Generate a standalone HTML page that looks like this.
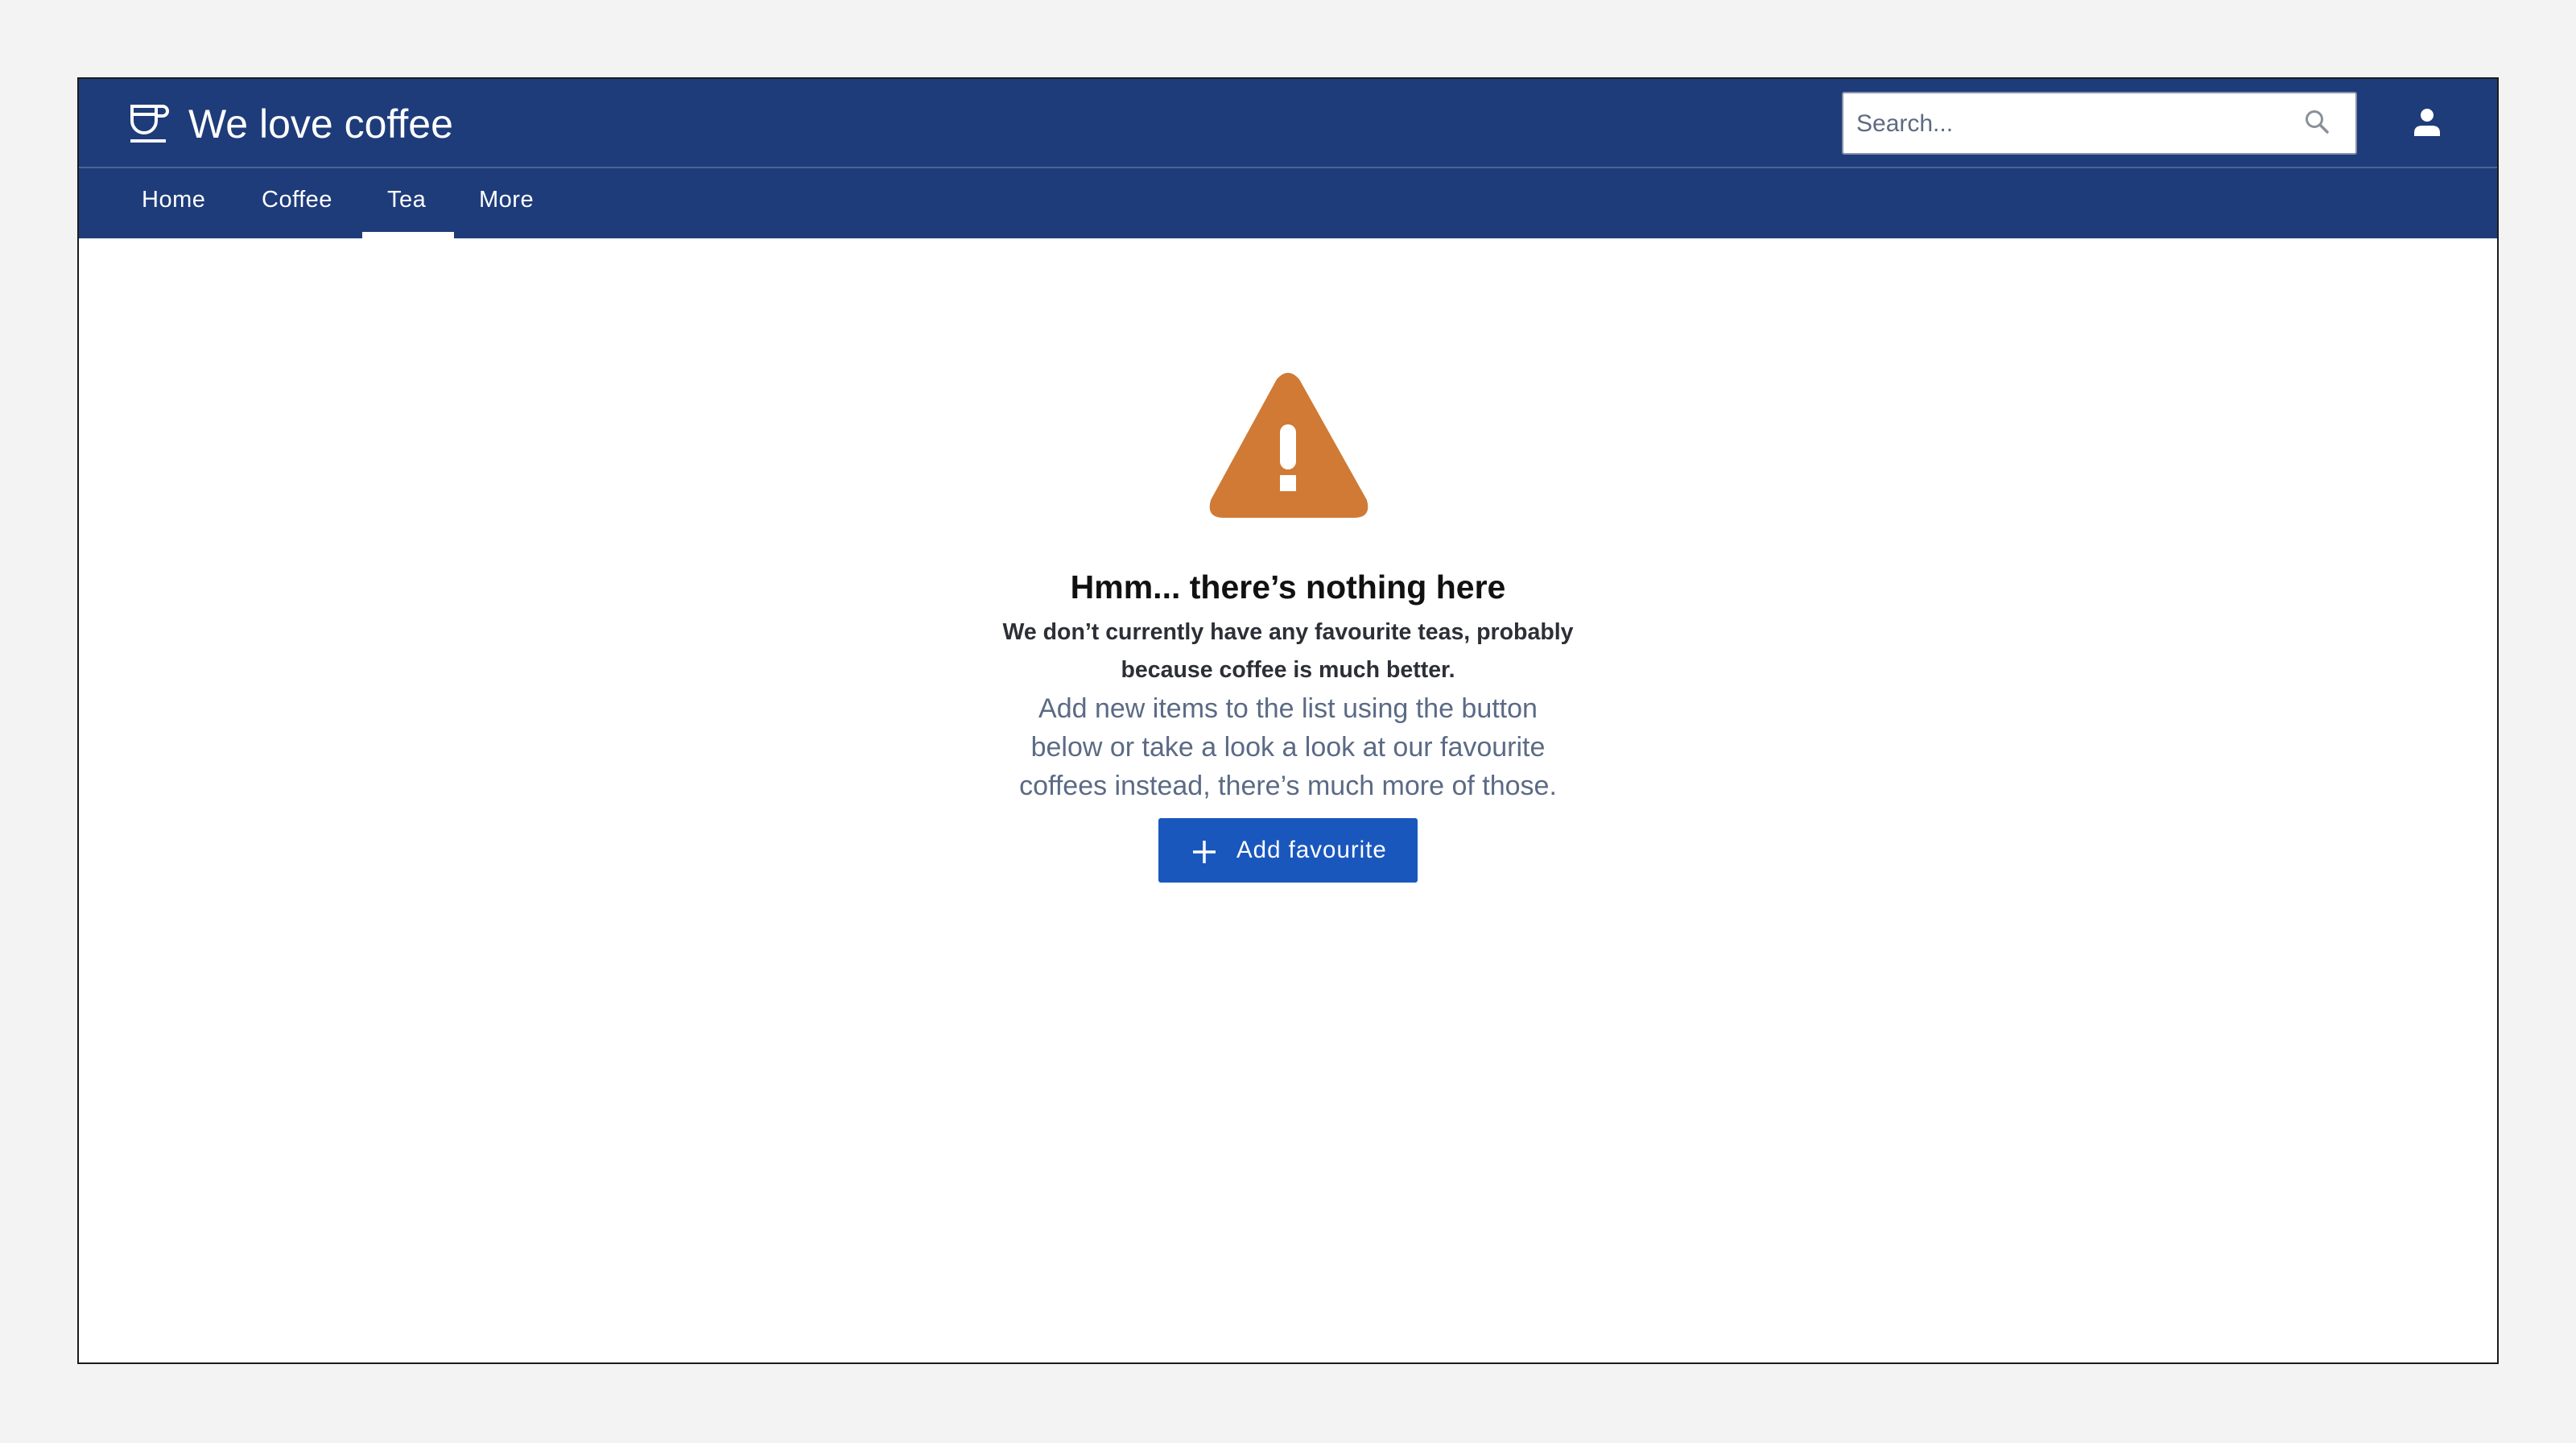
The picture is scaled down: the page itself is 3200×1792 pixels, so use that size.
<!DOCTYPE html>
<html><head><meta charset="utf-8"><style>
*{margin:0;padding:0;box-sizing:border-box}
body{width:3200px;height:1792px;background:#f3f3f3;font-family:"Liberation Sans",sans-serif;position:relative;overflow:hidden}
.frame{position:absolute;left:96px;top:96px;width:3008px;height:1598px;border:2px solid #1b1b1b;background:#fff}
.hdr{position:absolute;left:0;top:0;width:3004px;height:198px;background:#1e3c7a}
.div{position:absolute;left:0;top:109px;width:3004px;height:2px;background:#4c6597}
.abs{position:absolute}
.nav{position:absolute;top:135px;color:#fff;font-size:29px;line-height:30px;letter-spacing:0.5px}
.c{position:absolute;left:0;width:3004px;text-align:center}
</style></head><body>
<div class="frame">
 <div class="hdr">
  <svg class="abs" style="left:60px;top:30px" width="56" height="52" viewBox="0 0 56 52">
   <g fill="none" stroke="#fff" stroke-width="4">
    <path d="M6 4 H36 V22 A15 15 0 0 1 6 22 Z"/>
    <path d="M6 14 H36"/>
    <path d="M36 4 H44 A6 6 0 0 1 44 16 H36"/>
   </g>
   <rect x="4" y="45" width="44" height="4" fill="#fff"/>
  </svg>
  <div class="abs" style="left:136px;top:28px;color:#fff;font-size:50px;line-height:56px">We love coffee</div>
  <div class="div"></div>
  <div class="nav" style="left:78px">Home</div>
  <div class="nav" style="left:227px">Coffee</div>
  <div class="nav" style="left:383px">Tea</div>
  <div class="nav" style="left:497px">More</div>
  <div class="abs" style="left:352px;top:190px;width:114px;height:8px;background:#fff"></div>
  <div class="abs" style="left:2190px;top:16px;width:640px;height:78px;background:#fff;border:2px solid #8a93a6;border-radius:3px"></div>
  <div class="abs" style="left:2208px;top:38px;font-size:30px;line-height:36px;color:#5e6b80">Search...</div>
  <svg class="abs" style="left:2762px;top:36px" width="40" height="40" viewBox="0 0 40 40">
   <circle cx="15" cy="14" r="9.5" fill="none" stroke="#8a909a" stroke-width="3"/>
   <path d="M22 21 L31 30" stroke="#8a909a" stroke-width="3.5" stroke-linecap="round"/>
  </svg>
  <svg class="abs" style="left:2898px;top:34px" width="40" height="40" viewBox="0 0 40 40">
   <circle cx="19" cy="11" r="8" fill="#fff"/>
   <path d="M3 37 V33 Q3 24 13 24 H25 Q35 24 35 33 V37 Z" fill="#fff"/>
  </svg>
 </div>
 <svg class="abs" style="left:1400px;top:363px" width="206" height="184" viewBox="0 0 206 184">
  <path d="M88 10 Q102 -6 116 10 L200 160 Q206 182 184 182 H22 Q0 182 6 160 Z" fill="#d07a35"/>
  <rect x="92" y="66" width="20" height="56" rx="10" fill="#fff"/>
  <rect x="92" y="129" width="20" height="20" fill="#fff"/>
 </svg>
 <div class="c" style="top:607px;font-size:41px;line-height:48px;color:#111;font-weight:600">Hmm... there’s nothing here</div>
 <div class="c" style="top:664px;font-size:28.5px;line-height:47px;color:#2c2f36;font-weight:600">We don’t currently have any favourite teas, probably<br>because coffee is much better.</div>
 <div class="c" style="top:758px;font-size:34px;line-height:48px;color:#5b6a85">Add new items to the list using the button<br>below or take a look a look at our favourite<br>coffees instead, there’s much more of those.</div>
 <div class="abs" style="left:1341px;top:918px;width:322px;height:80px;background:#1a57bd;border-radius:3px"></div>
 <svg class="abs" style="left:1383px;top:945px" width="30" height="30" viewBox="0 0 30 30"><path d="M15 1V29M1 15H29" stroke="#fff" stroke-width="3.5"/></svg>
 <div class="abs" style="left:1438px;top:940px;font-size:29.5px;line-height:36px;color:#fff;letter-spacing:1px">Add favourite</div>
</div>
</body></html>
